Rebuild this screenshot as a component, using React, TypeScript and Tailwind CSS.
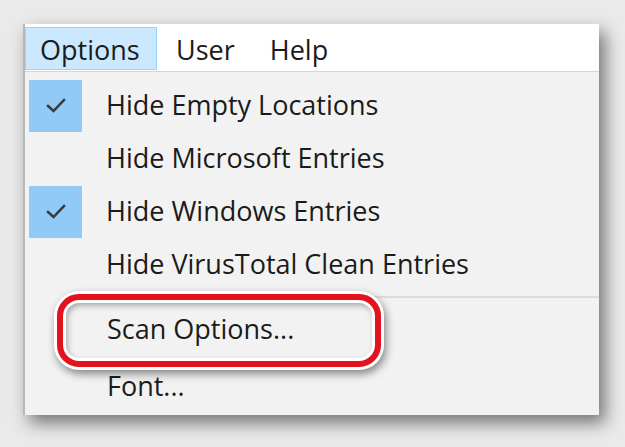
import React from "react";

const font = { fontFamily: '"Open Sans", "Noto Sans", sans-serif' };

function Check() {
  return (
    <svg width="22" height="17" viewBox="0 0 22 17" fill="none">
      <path d="M3 9 L8.5 14 L19 3" stroke="#3a3a3a" strokeWidth="2.5" strokeLinecap="square" />
    </svg>
  );
}

function Row({ label, checked }: { label: string; checked?: boolean }) {
  return (
    <div className="flex h-[53px] items-center">
      <div className="ml-[4px] flex h-[52px] w-[53px] items-center justify-center">
        {checked && (
          <div className="flex h-[52px] w-[53px] items-center justify-center bg-[#91c9f7]">
            <Check />
          </div>
        )}
      </div>
      <span className="ml-[24px] text-[27px] text-[#1b1b1b]">{label}</span>
    </div>
  );
}

export default function App() {
  return (
    <div className="h-[447px] w-[625px] overflow-hidden bg-[#eaeaea] pl-[23px] pt-[24px]" style={font}>
      <div className="h-[391px] w-[576px] border-l-2 border-[#b8b8b8] bg-[#f2f2f2] shadow-[6px_8px_16px_rgba(0,0,0,0.5)]">
        {/* menu bar */}
        <div className="flex h-[48px] items-end border-b border-[#d6d6d6] bg-white">
          <div className="mb-[1px] flex h-[43px] w-[132px] items-center border border-[#99d1ff] bg-[#cce8ff] pl-[14px] pt-[4px] text-[27px] text-[#1b1b1b]">
            Options
          </div>
          <div className="mb-[1px] flex h-[43px] items-center pl-[19px] pt-[4px] text-[27px] text-[#1b1b1b]">User</div>
          <div className="mb-[1px] flex h-[43px] items-center pl-[35px] pt-[4px] text-[27px] text-[#1b1b1b]">Help</div>
        </div>

        {/* dropdown */}
        <div className="pt-[7px]">
          <Row label="Hide Empty Locations" checked />
          <Row label="Hide Microsoft Entries" />
          <Row label="Hide Windows Entries" checked />
          <Row label="Hide VirusTotal Clean Entries" />
          <div className="ml-[64px] mt-[5px] h-[2px] bg-[#dcdcdc]" />
          <div className="relative flex h-[62px] items-center">
            <span className="ml-[82px] text-[27px] text-[#1b1b1b]">Scan Options...</span>
            <div className="absolute left-[32px] top-[-4px] h-[73px] w-[324px] rounded-[22px] border-[6px] border-[#e3121d] shadow-[0_0_0_3px_#ffffff,2px_4px_8px_3px_rgba(0,0,0,0.45),inset_0_0_0_3px_#ffffff,inset_2px_3px_6px_2px_rgba(0,0,0,0.35)]" />
          </div>
          <div className="flex h-[52px] items-center">
            <span className="ml-[82px] text-[27px] text-[#1b1b1b]">Font...</span>
          </div>
        </div>
      </div>
    </div>
  );
}
